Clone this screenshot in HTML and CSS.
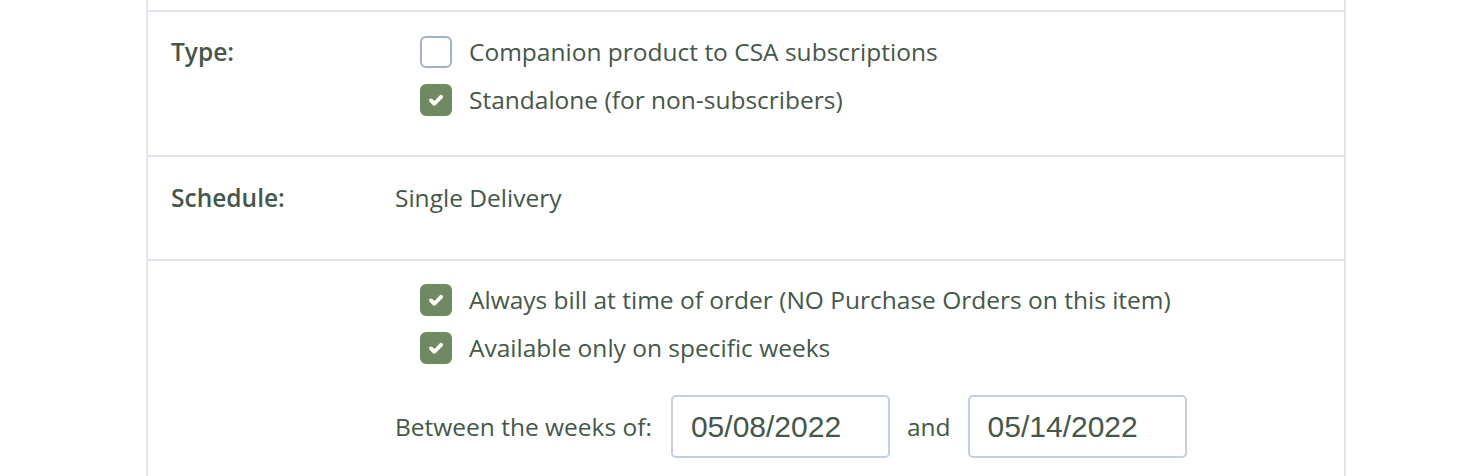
FILE: index.html
```html
<!DOCTYPE html>
<html lang="en">
<head>
    <meta charset="UTF-8">
    <meta name="viewport" content="width=device-width, initial-scale=1.0">
    <title>Product Settings</title>
    <link rel="stylesheet" href="styles.css">
</head>
<body>
    <div class="panel">
        <div class="row row-top"></div>

        <div class="row row-type">
            <div class="row-label">Type:</div>
            <div class="row-value">
                <label class="check">
                    <span class="box"></span>
                    Companion product to CSA subscriptions
                </label>
                <label class="check">
                    <span class="box checked">
                        <svg viewBox="0 0 16 16"><path d="M4.6 8.3l2.3 2.2 4.5-4.6"/></svg>
                    </span>
                    Standalone (for non-subscribers)
                </label>
            </div>
        </div>

        <div class="row row-schedule">
            <div class="row-label">Schedule:</div>
            <div class="row-value">
                <div class="plain">Single Delivery</div>
            </div>
        </div>

        <div class="row row-last">
            <div class="row-label"></div>
            <div class="row-value">
                <label class="check">
                    <span class="box checked">
                        <svg viewBox="0 0 16 16"><path d="M4.6 8.3l2.3 2.2 4.5-4.6"/></svg>
                    </span>
                    Always bill at time of order (NO Purchase Orders on this item)
                </label>
                <label class="check">
                    <span class="box checked">
                        <svg viewBox="0 0 16 16"><path d="M4.6 8.3l2.3 2.2 4.5-4.6"/></svg>
                    </span>
                    Available only on specific weeks
                </label>
                <div class="weeks">
                    <span class="weeks-label">Between the weeks of:</span>
                    <input type="text" class="date-input" value="05/08/2022">
                    <span>and</span>
                    <input type="text" class="date-input" value="05/14/2022">
                </div>
            </div>
        </div>
    </div>
</body>
</html>
```

FILE: styles.css
```css
:root {
    --text-color: #44574a;
    --green: #6f8a60;
    --line-color: #e1e4ef;
    --input-border: #c3cfdd;
    --unchecked: #a3b0c4;
}

* {
    box-sizing: border-box;
    margin: 0;
    padding: 0;
}

body {
    font-family: 'Open Sans', 'Noto Sans', sans-serif;
    color: var(--text-color);
    background-color: #fff;
    font-size: 24.5px;
}

.panel {
    width: 1200px;
    margin-left: 146px;
    border-left: 2px solid var(--line-color);
    border-right: 2px solid var(--line-color);
    min-height: 476px;
}

.row {
    display: grid;
    grid-template-columns: 224px 1fr;
    padding: 15px 23px 32px 23px;
    border-bottom: 2px solid var(--line-color);
    line-height: 48px;
}

.row-top {
    height: 12px;
    padding: 0;
}

.row-type {
    padding-top: 16px;
    padding-bottom: 31px;
}

.row-schedule {
    padding-top: 17px;
    padding-bottom: 37px;
}

.row-last {
    border-bottom: none;
}

.row-label {
    font-weight: 600;
}

.check {
    display: flex;
    align-items: center;
    gap: 17px;
    height: 48px;
    margin-left: 25px;
}

.box {
    width: 32px;
    height: 32px;
    border-radius: 6px;
    border: 2px solid var(--unchecked);
    background: #fff;
    flex-shrink: 0;
    display: flex;
    align-items: center;
    justify-content: center;
}

.box.checked {
    background: var(--green);
    border-color: var(--green);
}

.box svg {
    width: 24px;
    height: 24px;
    fill: none;
    stroke: #fff;
    stroke-width: 2.6;
    stroke-linecap: round;
    stroke-linejoin: round;
}

.weeks {
    display: flex;
    align-items: center;
    gap: 17px;
    margin-top: 23px;
}

.weeks-label {
    margin-right: 2px;
}

.date-input {
    width: 219px;
    height: 63px;
    border: 2px solid var(--input-border);
    border-radius: 5px;
    padding: 0 18px;
    font-family: 'Liberation Sans', Arial, sans-serif;
    font-size: 30px;
    color: var(--text-color);
    outline: none;
}
```
